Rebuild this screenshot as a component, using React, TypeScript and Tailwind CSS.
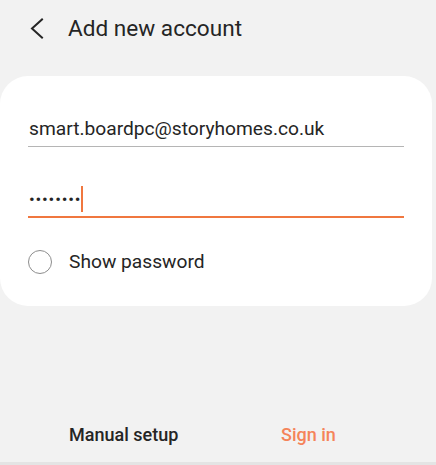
import React from "react";

export default function App() {
  return (
    <div
      className="w-[436px] h-[465px] bg-[#f2f2f2] flex flex-col overflow-hidden text-[#252525]"
      style={{ fontFamily: "Roboto, 'Noto Sans', sans-serif" }}
    >
      <div className="h-[58px] flex items-center shrink-0">
        <svg width="40" height="40" viewBox="0 0 40 40" className="ml-[18px]">
          <path d="M24 19.5 L14 28.5 L24 37.5" transform="translate(0,-9)" fill="none" stroke="#252525" strokeWidth="2" strokeLinecap="square" />
        </svg>
        <span className="ml-[10px] text-[22.6px] leading-[28px]">Add new account</span>
      </div>
      <div className="mt-[18px] w-[432px] bg-white rounded-[28px] pt-[41px] pb-[32px] px-[28px] shrink-0">
        <div className="border-b border-[#b5b5b5] pb-[5px] pl-[1px] text-[19.2px] leading-[24px]">
          smart.boardpc@storyhomes.co.uk
        </div>
        <div className="mt-[39px] border-b-2 border-[#f0773f] pb-[4px] flex items-center h-[32px]">
          <span className="text-[17px] tracking-[0.8px] leading-[26px] pl-[1px]">••••••••</span>
          <span className="w-[2px] h-[26px] bg-[#f0773f] ml-[0px]"></span>
        </div>
        <div className="mt-[32px] flex items-center">
          <span className="w-[24px] h-[24px] rounded-full border-[1.5px] border-[#8d8d8d]"></span>
          <span className="ml-[17px] text-[19.2px] leading-[24px]">Show password</span>
        </div>
      </div>
      <div className="flex-1"></div>
      <div className="flex items-center h-[30px] mb-[13px] text-[18px] font-medium">
        <span className="ml-[69px] w-[212px]">Manual setup</span>
        <span className="text-[#f5845a]">Sign in</span>
      </div>
      <div className="h-[3px] bg-[#e4e4e4] shrink-0"></div>
    </div>
  );
}
